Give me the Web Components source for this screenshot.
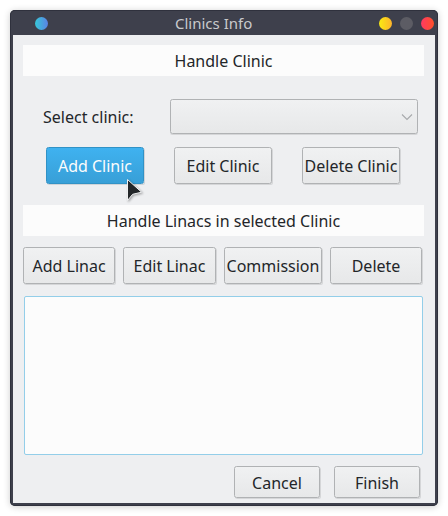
<!DOCTYPE html>
<html lang="en"><head><meta charset="utf-8"><title>Clinics Info</title>
<style>html,body{margin:0;background:#fff;overflow:hidden}body{width:448px;height:516px;font:16px/22px "Noto Sans",sans-serif;color:#232629}</style></head><body>
<clinic-window></clinic-window>
<script>
const define=(name,html)=>customElements.define(name,class extends HTMLElement{
  constructor(){super();const t=document.createElement('template');t.innerHTML=html;
    this.attachShadow({mode:'open'}).append(t.content.cloneNode(true));}
});
define('push-button',`<style>
:host{display:flex;box-sizing:border-box;align-items:center;justify-content:center;height:37px;border:1px solid #b0b2b4;border-radius:2.5px;background:linear-gradient(#f0f1f2,#e7e8e9);box-shadow:1px 1px 0 #d5d6d8;white-space:nowrap}
:host([active]){background:linear-gradient(#3fb2f0,#389fd7);border-color:#3192c6;color:#fcfcfc;box-shadow:1px 1px 0 #cfd4d8}
</style><slot></slot>`);
define('section-header',`<style>:host{display:flex;align-items:center;justify-content:center;height:31px;background:#fcfcfc}</style><slot></slot>`);
define('combo-box',`<style>
:host{display:flex;box-sizing:border-box;align-items:center;justify-content:flex-end;height:35px;padding-right:4px;border:1px solid #b0b2b4;border-radius:2.5px;background:linear-gradient(#f0f1f2,#e7e8e9);box-shadow:0 1px 0 #d5d6d8}
svg{display:block}</style><svg width="12" height="8" viewBox="0 0 12 8" fill="none" stroke="#a7a9ab" stroke-width="1.1"><path d="M1 1.5 6 6.5 11 1.5"/></svg>`);
define('title-bar',`<style>
:host{display:flex;box-sizing:border-box;align-items:center;height:25px;padding:2px 1px 0 22px;font-size:15px;line-height:20px;color:#c9cacc}
i{width:13px;height:13px;border-radius:50%;flex:none}
.app{background:linear-gradient(90deg,#36c8d8,#5b82e5)}
.min{background:linear-gradient(90deg,#f9ea12,#fdb32b);margin-right:8px}
.max{background:#5c5c64;margin-right:8px}
.close{background:linear-gradient(90deg,#ff3a62,#ff5029)}
.t{flex:1;padding:0 0 2px 127px}
</style><i class="app"></i><span class="t"><slot></slot></span><i class="min"></i><i class="max"></i><i class="close"></i>`);
define('list-box',`<style>:host{display:block;box-sizing:border-box;height:159px;border:1px solid #93cee9;border-radius:2px;background:#fcfcfc}</style>`);
define('mouse-pointer',`<style>:host{position:absolute;left:80px;top:31px;filter:drop-shadow(1px 1px 1px #0005)}svg{display:block}</style>
<svg width="18" height="25" viewBox="0 0 18 25"><path d="M1.5 1.5V22.5L6.6 16.3 15.6 14.2Z" fill="#232629" stroke="#eff0f1" stroke-width="1"/></svg>`);
define('clinic-window',`<style>
:host{display:block;box-sizing:border-box;width:428px;height:496px;margin:10px;padding:0 3px 3px;border-radius:5px;background:#3e404c;box-shadow:inset 0 0 0 1px #2f313d,0 1px 7px #0003}
main{box-sizing:border-box;height:468px;padding:10px 11px 0 10px;background:#eeeff1}
.pick{display:grid;grid-template-columns:127px 248px;margin:23px 0 13px 20px;align-items:center}
.clinic{display:grid;grid-template-columns:repeat(3,98px);gap:30px;margin:0 0 21px 23px}
.linac{display:grid;grid-template-columns:92px 93px 98px 92px;gap:8px;margin:11px 0 12px}
list-box{margin:0 1px 11px}
.end{display:grid;grid-template-columns:86px 86px;gap:14px;justify-content:end;padding-right:4px}
.end push-button{height:32px;padding-top:2px}
.hover{position:relative}
</style><title-bar>Clinics Info</title-bar><main>
<section-header>Handle Clinic</section-header>
<div class="pick"><span>Select clinic:</span><combo-box></combo-box></div>
<div class="clinic"><div class="hover"><push-button active>Add Clinic</push-button><mouse-pointer></mouse-pointer></div><push-button>Edit Clinic</push-button><push-button>Delete Clinic</push-button></div>
<section-header>Handle Linacs in selected Clinic</section-header>
<div class="linac"><push-button>Add Linac</push-button><push-button>Edit Linac</push-button><push-button>Commission</push-button><push-button>Delete</push-button></div>
<list-box></list-box>
<div class="end"><push-button>Cancel</push-button><push-button>Finish</push-button></div>
</main>`);
</script></body></html>
